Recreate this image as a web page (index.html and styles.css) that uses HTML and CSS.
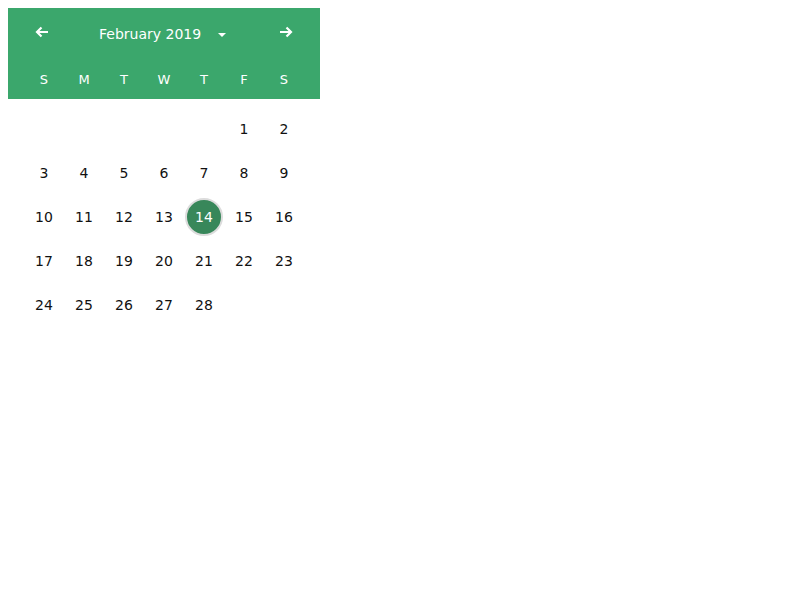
FILE: index.html
```html
<!DOCTYPE html>
<html>
<head>
<meta charset="utf-8">
<link rel="stylesheet" href="styles.css">
</head>
<body>
<div class="calendar">
  <div class="header">
    <div class="title-row">
      <button class="nav" aria-label="Previous month">
        <svg width="14" height="12" viewBox="0 0 14 12"><path d="M13 6H2M6.5 1.5L2 6l4.5 4.5" fill="none" stroke="#fff" stroke-width="2.2"/></svg>
      </button>
      <div class="month">
        <span class="month-label">February 2019</span>
        <svg class="caret" width="10" height="6" viewBox="0 0 10 6"><path d="M1 1h8L5 5z" fill="#fff"/></svg>
      </div>
      <button class="nav" aria-label="Next month">
        <svg width="14" height="12" viewBox="0 0 14 12"><path d="M1 6h11M7.5 1.5L12 6l-4.5 4.5" fill="none" stroke="#fff" stroke-width="2.2"/></svg>
      </button>
    </div>
    <div class="weekdays">
      <span>S</span><span>M</span><span>T</span><span>W</span><span>T</span><span>F</span><span>S</span>
    </div>
  </div>
  <div class="days">
    <span></span><span></span><span></span><span></span><span></span><span class="day">1</span><span class="day">2</span>
    <span class="day">3</span><span class="day">4</span><span class="day">5</span><span class="day">6</span><span class="day">7</span><span class="day">8</span><span class="day">9</span>
    <span class="day">10</span><span class="day">11</span><span class="day">12</span><span class="day">13</span><span class="day selected"><span class="dot">14</span></span><span class="day">15</span><span class="day">16</span>
    <span class="day">17</span><span class="day">18</span><span class="day">19</span><span class="day">20</span><span class="day">21</span><span class="day">22</span><span class="day">23</span>
    <span class="day">24</span><span class="day">25</span><span class="day">26</span><span class="day">27</span><span class="day">28</span><span></span><span></span>
  </div>
</div>
</body>
</html>
```
FILE: styles.css
```css
html, body {
  margin: 0;
  padding: 0;
  background: #fff;
}
body {
  padding: 8px;
  font-family: "DejaVu Sans", "Liberation Sans", sans-serif;
  font-size: 14px;
  color: #111;
}
.calendar {
  width: 312px;
}
.header {
  background: #3ba76c;
  color: #fff;
}
.title-row {
  height: 52px;
  display: flex;
  align-items: center;
  padding: 0 16px;
}
.nav {
  width: 36px;
  height: 36px;
  padding: 0;
  border: 0;
  background: transparent;
  display: flex;
  align-items: center;
  justify-content: center;
  margin-top: -4px;
}
.month {
  flex: 1;
  display: flex;
  align-items: center;
  justify-content: flex-start;
  padding-left: 39px;
  gap: 16px;
}
.month-label {
  font-size: 14px;
}
.caret {
  margin-top: 1px;
}
.weekdays {
  height: 39px;
  display: grid;
  grid-template-columns: repeat(7, 40px);
  padding: 0 16px;
  align-items: center;
  font-size: 13px;
}
.weekdays span {
  text-align: center;
}
.days {
  display: grid;
  grid-template-columns: repeat(7, 40px);
  grid-auto-rows: 44px;
  padding: 8px 16px;
  font-size: 14px;
}
.day {
  display: flex;
  align-items: center;
  justify-content: center;
}
.dot {
  width: 34px;
  height: 34px;
  border-radius: 50%;
  background: #38875a;
  border: 2px solid #dcdcdc;
  color: #fff;
  display: flex;
  align-items: center;
  justify-content: center;
}
```
